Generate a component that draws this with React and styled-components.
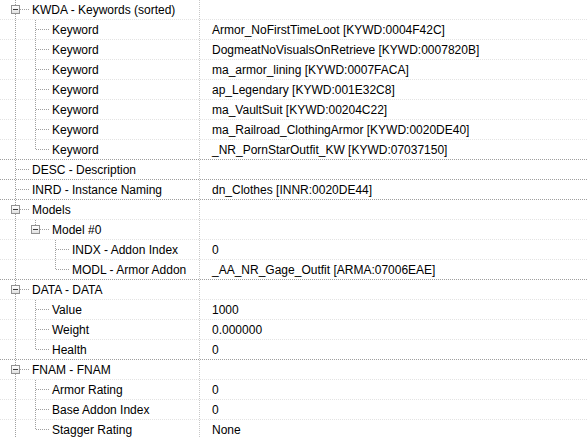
import { createGlobalStyle, styled } from 'styled-components'

const GlobalStyle = createGlobalStyle`
  html, body {
    margin: 0;
    padding: 0;
    background: #ffffff;
    overflow: hidden;
  }
`

const LINE = '#a0a0a0'
const FAINT = '#e3e3e3'
const DIVIDER = '#c8c8c8'

const dotsX = (c) => `repeating-linear-gradient(to right, ${c} 0 1px, transparent 1px 2px)`
const dotsY = (c) => `repeating-linear-gradient(to bottom, ${c} 0 1px, transparent 1px 2px)`

const Tree = styled.div`
  width: 587px;
  height: 438px;
  overflow: hidden;
  font-family: "Liberation Sans", Arial, sans-serif;
  font-size: 12px;
  color: #000;
`

const Row = styled.div`
  display: flex;
  height: 20px;
  background: ${({ $strong }) => dotsX($strong ? LINE : FAINT)} 0 19px / 100% 1px no-repeat;
`

const NameCell = styled.div`
  display: flex;
  flex: none;
  width: 200px;
  padding-left: 5px;
  box-sizing: border-box;
  background: ${dotsY(DIVIDER)} right top / 1px 100% no-repeat;
  white-space: nowrap;
  overflow: hidden;
`

const Guide = styled.span`
  flex: none;
  width: 20px;
  height: 20px;
  background: ${({ $on }) => ($on ? `${dotsY(LINE)} 10px 0 / 1px 20px no-repeat` : 'none')};
`

const Connector = styled.span`
  flex: none;
  width: 24px;
  height: 20px;
  box-sizing: border-box;
  padding: 5px 0 0 6px;
  background:
    ${dotsX(LINE)} 11px 9px / 13px 1px no-repeat,
    ${dotsY(LINE)} 10px 0 / 1px ${({ $full }) => ($full ? '20px' : '10px')} no-repeat;
`

const Box = styled.span`
  display: block;
  position: relative;
  width: 9px;
  height: 9px;
  box-sizing: border-box;
  border: 1px solid #919191;
  background: linear-gradient(#ffffff, #e2e2e2);

  &::after {
    content: '';
    position: absolute;
    left: 1px;
    top: 3px;
    width: 5px;
    height: 1px;
    background: #3a3a3a;
  }
`

const Label = styled.span`
  margin-left: 3px;
  line-height: 20px;
`

const Value = styled.div`
  padding-left: 12px;
  line-height: 20px;
  white-space: nowrap;
`

const rows = [
  { level: 0, name: 'KWDA - Keywords (sorted)', open: true },
  { level: 1, name: 'Keyword', value: 'Armor_NoFirstTimeLoot [KYWD:0004F42C]' },
  { level: 1, name: 'Keyword', value: 'DogmeatNoVisualsOnRetrieve [KYWD:0007820B]' },
  { level: 1, name: 'Keyword', value: 'ma_armor_lining [KYWD:0007FACA]' },
  { level: 1, name: 'Keyword', value: 'ap_Legendary [KYWD:001E32C8]' },
  { level: 1, name: 'Keyword', value: 'ma_VaultSuit [KYWD:00204C22]' },
  { level: 1, name: 'Keyword', value: 'ma_Railroad_ClothingArmor [KYWD:0020DE40]' },
  { level: 1, name: 'Keyword', value: '_NR_PornStarOutfit_KW [KYWD:07037150]', last: true },
  { level: 0, name: 'DESC - Description' },
  { level: 0, name: 'INRD - Instance Naming', value: 'dn_Clothes [INNR:0020DE44]' },
  { level: 0, name: 'Models', open: true },
  { level: 1, name: 'Model #0', open: true, last: true },
  { level: 2, name: 'INDX - Addon Index', value: '0' },
  { level: 2, name: 'MODL - Armor Addon', value: '_AA_NR_Gage_Outfit [ARMA:07006EAE]', last: true },
  { level: 0, name: 'DATA - DATA', open: true },
  { level: 1, name: 'Value', value: '1000' },
  { level: 1, name: 'Weight', value: '0.000000' },
  { level: 1, name: 'Health', value: '0', last: true },
  { level: 0, name: 'FNAM - FNAM', open: true },
  { level: 1, name: 'Armor Rating', value: '0' },
  { level: 1, name: 'Base Addon Index', value: '0' },
  { level: 1, name: 'Stagger Rating', value: 'None', last: true },
]

// which ancestor columns keep a vertical line running through a row
function guidesFor(index) {
  const row = rows[index]
  const guides = []
  for (let lvl = 0; lvl < row.level; lvl++) {
    if (lvl === 0) {
      guides.push(true)
      continue
    }
    // find the ancestor at this level and check whether it has a later sibling
    let ancestor = index
    while (rows[ancestor].level !== lvl) ancestor--
    guides.push(!rows[ancestor].last)
  }
  return guides
}

export default function App() {
  return (
    <>
      <GlobalStyle />
      <Tree>
        {rows.map((row, i) => {
          const next = rows[i + 1]
          const strong = !next || next.level === 0
          const full = row.level === 0 || !row.last
          return (
            <Row key={i} $strong={strong}>
              <NameCell>
                {guidesFor(i).map((on, g) => (
                  <Guide key={g} $on={on} />
                ))}
                <Connector $full={full}>{row.open && <Box />}</Connector>
                <Label>{row.name}</Label>
              </NameCell>
              <Value>{row.value}</Value>
            </Row>
          )
        })}
      </Tree>
    </>
  )
}
